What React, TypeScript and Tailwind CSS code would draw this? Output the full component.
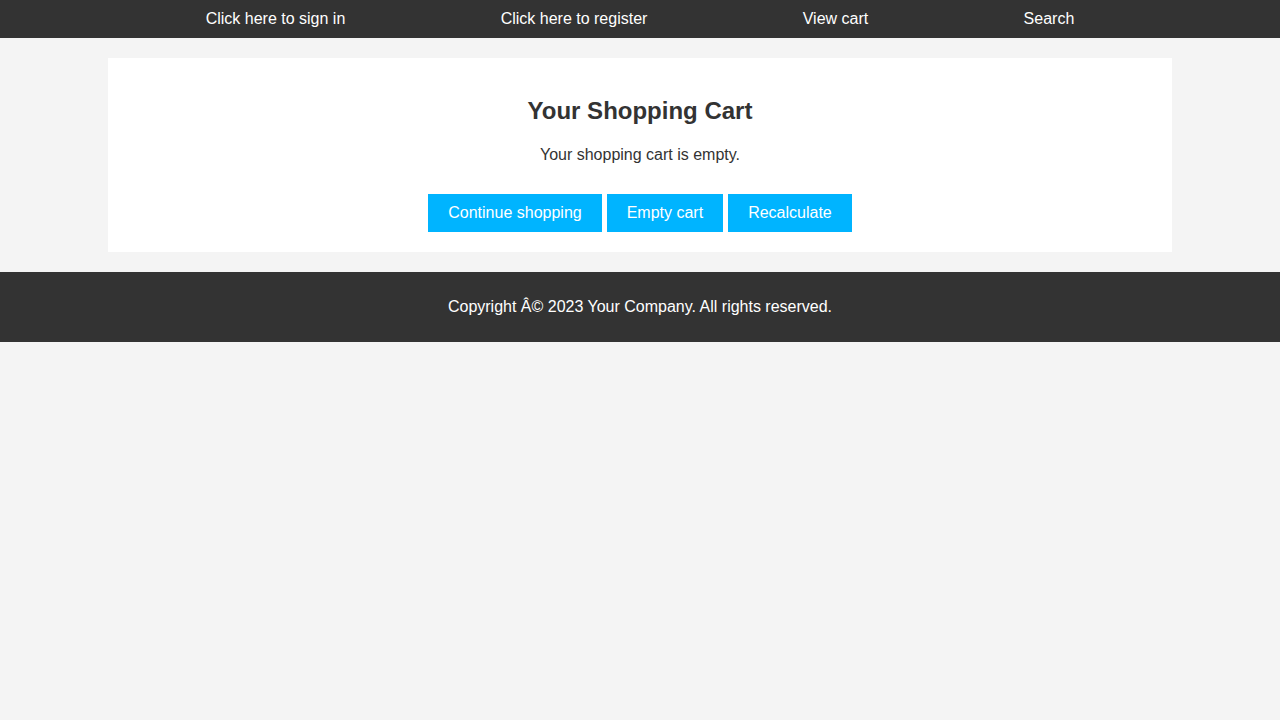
export default function App() {
  const links = [
    "Click here to sign in",
    "Click here to register",
    "View cart",
    "Search",
  ];
  const buttons = ["Continue shopping", "Empty cart", "Recalculate"];

  return (
    <div className="min-h-screen bg-[#f4f4f4] font-['Liberation_Sans',Arial,sans-serif] text-[#333]">
      <nav className="h-[38px] bg-[#333]">
        <ul className="mx-auto flex h-full w-[1024px] items-center justify-around">
          {links.map((link) => (
            <li key={link}>
              <a href="#" className="text-[16px] text-white">
                {link}
              </a>
            </li>
          ))}
        </ul>
      </nav>

      <main className="mx-auto my-5 w-[1064px] bg-white p-5 text-center">
        <h2 className="mt-[19px] text-[24px] leading-[28px] font-bold">
          Your Shopping Cart
        </h2>
        <p className="mt-[21px] text-[16px] leading-[18px]">
          Your shopping cart is empty.
        </p>
        <div className="mt-[30px] flex justify-center gap-[5px]">
          {buttons.map((b) => (
            <button
              key={b}
              className="h-[38px] bg-[#00b4ff] px-5 text-[16px] text-white"
            >
              {b}
            </button>
          ))}
        </div>
      </main>

      <footer className="flex h-[70px] items-center justify-center bg-[#333] text-[16px] text-white">
        <p>Copyright Â© 2023 Your Company. All rights reserved.</p>
      </footer>
    </div>
  );
}
